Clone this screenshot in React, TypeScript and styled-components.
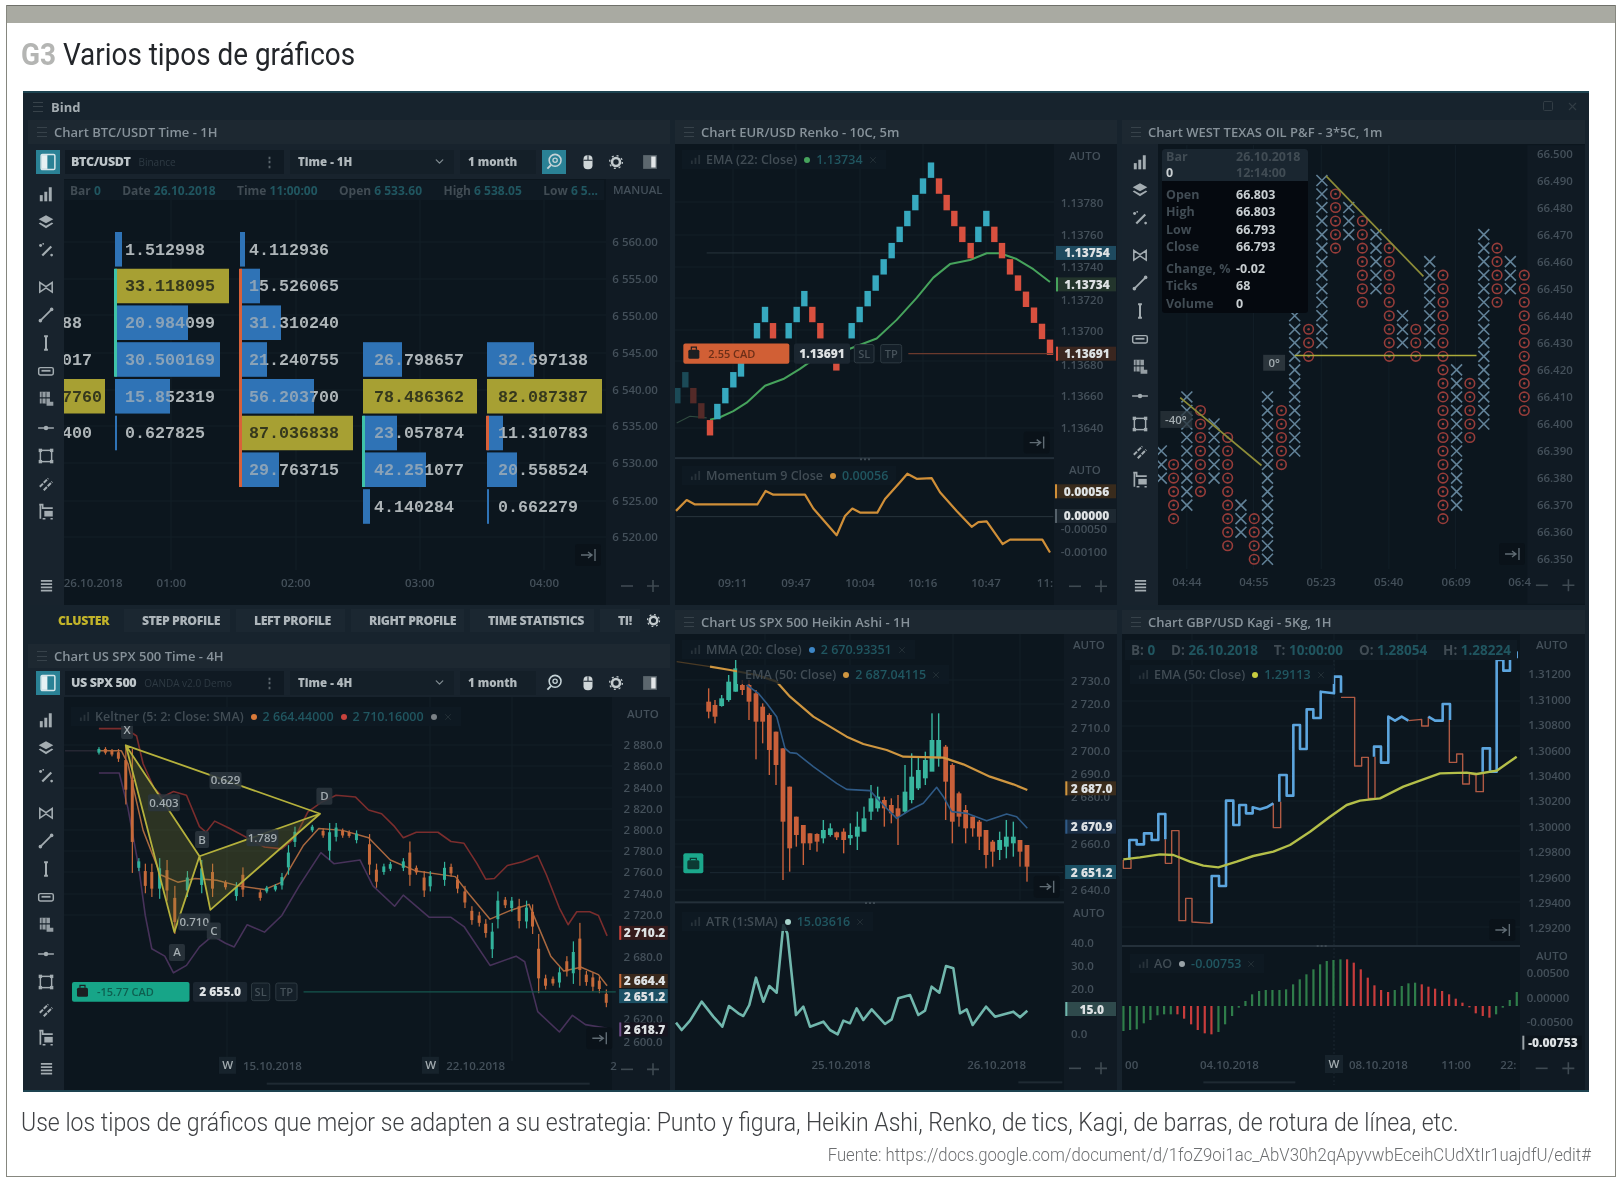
import React from 'react';
import styled, { createGlobalStyle } from 'styled-components';
import { ChevronDown, Square, X } from 'lucide-react';

const GlobalStyle = createGlobalStyle`
  body {
    margin: 0;
    background: #fff;
    font-family: 'Open Sans', 'Liberation Sans', sans-serif;
  }
`;

const UI_FONT = `'Open Sans', 'Liberation Sans', sans-serif`;

// --- page frame

const Sheet = styled.div`
  box-sizing: border-box;
  width: 1610px;
  height: 1172px;
  margin: 5px 0 0 6px;
  border: 1px solid #86877f;
  border-top: none;
  overflow: hidden;
`;
const TopBand = styled.div`
  height: 17px;
  background: #a9aaa2;
  border-top: 1px solid #6f706a;
`;
const Heading = styled.h1`
  display: flex;
  align-items: center;
  box-sizing: border-box;
  height: 68px;
  margin: 0;
  padding: 0 0 6px 15.5px;
  font-family: Roboto, 'Liberation Sans', sans-serif;
  font-size: 31px;
  font-weight: 400;
  color: #23262a;
  white-space: pre;
  transform: scaleX(0.9);
  transform-origin: left;
`;
const HeadingCode = styled.span`
  font-weight: 700;
  color: #b4b5b3;
`;
const Caption = styled.p`
  margin: 15px 0 0 14px;
  font-family: Roboto, 'Liberation Sans', sans-serif;
  font-size: 25.5px;
  font-weight: 300;
  color: #3f4144;
  white-space: nowrap;
  transform: scaleX(0.904);
  transform-origin: left;
`;
const Source = styled.p`
  margin: 8px 24px 0 0;
  text-align: right;
  font-family: Roboto, 'Liberation Sans', sans-serif;
  font-size: 17.5px;
  font-weight: 300;
  color: #6d6f71;
  white-space: nowrap;
  transform: scaleX(0.957);
  transform-origin: right;
`;

// --- trading app window

const AppWindow = styled.div`
  box-sizing: border-box;
  width: 1566px;
  height: 1001px;
  margin-left: 16px;
  background: #17232d;
  border-top: 2px solid #1d4350;
  border-bottom: 2px solid #1d4350;
  filter: blur(0.75px);
  overflow: hidden;
`;
const WindowBar = styled.div`
  display: flex;
  align-items: center;
  height: 27px;
  padding: 0 10px;
  gap: 8px;
  color: #a3acb1;
  font-size: 13px;
  font-weight: 700;
`;
const WindowActions = styled.div`
  display: flex;
  gap: 12px;
  margin-left: auto;
  color: #323d45;
`;
const Columns = styled.div`
  display: grid;
  grid-template-columns: 642px 442px 463px;
  gap: 5px;
  padding: 0 4px 0 5px;
`;
const Column = styled.div<{ $gap?: number }>`
  display: flex;
  flex-direction: column;
  gap: ${(p) => p.$gap ?? 5}px;
`;
const Panel = styled.section<{ $h: number }>`
  display: flex;
  flex-direction: column;
  height: ${(p) => p.$h}px;
  background: #141f28;
`;
const TitleBar = styled.div`
  display: flex;
  flex: none;
  align-items: center;
  gap: 7px;
  height: 24px;
  padding: 0 9px;
  background: #1d2831;
  color: #87929a;
  font-size: 13px;
  font-weight: 600;
  white-space: nowrap;
`;
const Grip = styled.span`
  flex: none;
  width: 10px;
  height: 8px;
  border-top: 1px solid #37424a;
  border-bottom: 1px solid #37424a;
  background: linear-gradient(#37424a, #37424a) center / 100% 1px no-repeat;
`;
const Toolbar = styled.div<{ $h: number }>`
  display: flex;
  flex: none;
  align-items: center;
  gap: 6px;
  height: ${(p) => p.$h}px;
  padding: 0 8px;
  background: #18232d;
`;
const ToolButton = styled.span<{ $on?: boolean; $ml?: number }>`
  display: flex;
  align-items: center;
  justify-content: center;
  flex: none;
  width: 24px;
  height: 24px;
  margin-left: ${(p) => p.$ml ?? 0}px;
  background: ${(p) => (p.$on ? '#2a8195' : 'transparent')};
`;
const SymbolBox = styled.div`
  display: flex;
  flex: none;
  align-items: center;
  gap: 8px;
  box-sizing: border-box;
  width: 219px;
  height: 24px;
  margin-left: -1px;
  padding: 0 8px 0 6px;
  background: #101a23;
  color: #bcc4c8;
  font-size: 12.5px;
  font-weight: 800;
  letter-spacing: -0.4px;
`;
const SymbolHint = styled.span`
  flex: 1;
  color: #2e3a43;
  font-size: 10px;
  font-weight: 400;
  letter-spacing: 0;
`;
const Dots = styled.span`
  color: #5a656c;
`;
const SelectBox = styled.div<{ $w: number }>`
  display: flex;
  flex: none;
  align-items: center;
  justify-content: space-between;
  box-sizing: border-box;
  width: ${(p) => p.$w}px;
  height: 24px;
  padding: 0 8px;
  background: #141f28;
  color: #b0b8bc;
  font-size: 11.5px;
  font-weight: 800;
`;
const Body = styled.div`
  display: flex;
  flex: 1;
  min-height: 0;
`;
const Rail = styled.div<{ $top: number; $foot: number }>`
  display: flex;
  flex: none;
  flex-direction: column;
  align-items: center;
  width: 36px;
  padding: ${(p) => p.$top}px 0 ${(p) => p.$foot}px;
  box-sizing: border-box;
  background: #18232d;
`;
const RailIcon = styled.span<{ $gap?: boolean }>`
  display: flex;
  align-items: center;
  justify-content: center;
  flex: none;
  height: 28.2px;
  margin-bottom: ${(p) => (p.$gap ? 8 : 0)}px;
  color: #a3acb1;
`;
const RailFoot = styled(RailIcon)`
  margin-top: auto;
`;
const ChartArea = styled.div`
  position: relative;
  flex: 1;
  min-width: 0;
  background: #0c161e;
`;
const Plot = styled.svg`
  display: block;
  width: 100%;
  height: 100%;
`;
const Legend = styled.div<{ $left: number; $top: number }>`
  position: absolute;
  left: ${(p) => p.$left}px;
  top: ${(p) => p.$top}px;
  display: flex;
  align-items: center;
  gap: 5px;
  height: 19px;
  padding: 0 8px;
  background: #0f1a23d0;
  color: #414c54;
  font-size: 12.5px;
  font-weight: 600;
  white-space: nowrap;
`;
const LegendDot = styled.i<{ $c: string }>`
  width: 6px;
  height: 6px;
  margin: 0 1px 0 2px;
  border-radius: 50%;
  background: ${(p) => p.$c};
`;
const LegendValue = styled.span`
  color: #205660;
`;
const InfoStrip = styled.div<{ $left: number; $top: number; $w: number; $fs: number }>`
  position: absolute;
  left: ${(p) => p.$left}px;
  top: ${(p) => p.$top}px;
  box-sizing: border-box;
  display: flex;
  align-items: center;
  justify-content: space-between;
  width: ${(p) => p.$w}px;
  height: 20px;
  padding: 0 6px;
  background: #0f1a23;
  color: #414c54;
  font-size: ${(p) => p.$fs}px;
  font-weight: 700;
  white-space: nowrap;
`;
const Tabs = styled.div`
  display: flex;
  flex: none;
  align-items: center;
  gap: 6px;
  box-sizing: border-box;
  height: 34px;
  padding: 0 8px 3px 14px;
  background: #17232d;
`;
const Tab = styled.span<{ $w: number; $on?: boolean }>`
  display: flex;
  flex: none;
  align-items: center;
  box-sizing: border-box;
  width: ${(p) => p.$w}px;
  height: 23px;
  padding-left: ${(p) => (p.$on ? 16 : 18)}px;
  background: ${(p) => (p.$on ? 'transparent' : '#1b2731')};
  color: ${(p) => (p.$on ? '#c2b42a' : '#adb5ba')};
  font-size: 12.3px;
  font-weight: 800;
  letter-spacing: -0.4px;
  white-space: nowrap;
`;
const PanelGap = styled.div`
  flex: none;
  height: 5px;
`;
const PfCard = styled.div`
  position: absolute;
  left: 4px;
  top: 5px;
  width: 146px;
  height: 164px;
  background: #05090f;
  border-radius: 3px;
  font-size: 12.5px;
  font-weight: 700;
  overflow: hidden;
`;
const PfHead = styled.div`
  display: grid;
  grid-template-columns: 70px 1fr;
  align-items: center;
  height: 32px;
  padding: 0 4px;
  background: #1a2630;
  color: #414c54;
  line-height: 16px;
`;
const PfRows = styled.dl`
  display: grid;
  grid-template-columns: 70px 1fr;
  margin: 5px 0 0;
  padding: 0 4px;
  line-height: 17.3px;
`;
const PfName = styled.dt<{ $sep?: boolean }>`
  margin-top: ${(p) => (p.$sep ? 5 : 0)}px;
  color: #414c54;
`;
const PfValue = styled.dd<{ $sep?: boolean }>`
  margin: ${(p) => (p.$sep ? 5 : 0)}px 0 0;
  color: #c8ced1;
`;
const PfBright = styled.span`
  color: #c8ced1;
`;

// --- svg parts of the charts

const AxisText = styled.text`
  fill: #44505a;
  font-family: ${UI_FONT};
  font-size: 11.5px;
  font-weight: 600;
`;
const TagText = styled.text`
  fill: #dde1e3;
  font-family: ${UI_FONT};
  font-size: 12px;
  font-weight: 800;
`;
const ClusterText = styled.text<{ $dark?: boolean }>`
  fill: ${(p) => (p.$dark ? '#35381d' : '#aeb5b8')};
  font-family: 'Liberation Mono', monospace;
  font-size: 16.7px;
  font-weight: 700;
`;
const SmallLabel = styled.text`
  fill: #a3acb0;
  font-family: ${UI_FONT};
  font-size: 11.5px;
  font-weight: 600;
  text-anchor: middle;
`;
const OrderText = styled.text<{ $c: string }>`
  fill: ${(p) => p.$c};
  font-family: ${UI_FONT};
  font-size: 11px;
  font-weight: 600;
`;

type Z = { ox: number; oy: number; sx: number; sy: number };
type Pt = [number, number];

// crops the coordinates were read from
const Z1: Z = { ox: 0, oy: 0, sx: 2.306, sy: 2.529 };
const Z2: Z = { ox: 670, oy: 90, sx: 3, sy: 2.958 };
const Z3: Z = { ox: 1120, oy: 90, sx: 3, sy: 2.958 };
const Z4: Z = { ox: 0, oy: 600, sx: 2.306, sy: 2.703 };
const Z5: Z = { ox: 670, oy: 600, sx: 3, sy: 3 };
const Z6: Z = { ox: 1120, oy: 600, sx: 3, sy: 3 };

const px = (z: Z, x: number) => z.ox + x / z.sx;
const py = (z: Z, y: number) => z.oy + y / z.sy;
const line = (z: Z, pts: Pt[]) => pts.map(([x, y]) => `${px(z, x)},${py(z, y)}`).join(' ');

const Poly = ({ z, pts, c, w = 1.5 }: { z: Z; pts: Pt[]; c: string; w?: number }) => (
  <polyline points={line(z, pts)} fill="none" stroke={c} strokeWidth={w} strokeLinejoin="round" />
);

const Tag = ({ z, x0, x1, y, text, bg, stripe }: { z: Z; x0: number; x1: number; y: number; text: string; bg: string; stripe: string }) => (
  <g>
    <rect x={px(z, x0)} y={py(z, y) - 7} width={px(z, x1) - px(z, x0)} height={14} fill={bg} />
    <rect x={px(z, x0)} y={py(z, y) - 7} width={2} height={14} fill={stripe} />
    <TagText x={(px(z, x0) + px(z, x1)) / 2 + 1} y={py(z, y) + 4.5} textAnchor="middle">{text}</TagText>
  </g>
);

const Axis = ({ z, x, ticks }: { z: Z; x: number; ticks: [string, number][] }) => (
  <>
    {ticks.map(([t, y]) => (
      <AxisText key={t + y} x={px(z, x)} y={py(z, y) + 4}>{t}</AxisText>
    ))}
  </>
);

const TimeAxis = ({ z, y, ticks }: { z: Z; y: number; ticks: [string, number][] }) => (
  <>
    {ticks.map(([t, x]) => (
      <AxisText key={t + x} x={px(z, x)} y={py(z, y) + 4} textAnchor="middle">{t}</AxisText>
    ))}
  </>
);

const Zoomers = ({ x1, x2, y }: { x1: number; x2: number; y: number }) => (
  <g stroke="#3f4a52" strokeWidth={1.6}>
    <path d={`M${x1 - 6} ${y}h12`} />
    <path d={`M${x2 - 6} ${y}h12M${x2} ${y - 6}v12`} />
  </g>
);

const JumpButton = ({ x, y }: { x: number; y: number }) => (
  <g>
    <rect x={x - 13} y={y - 11} width={26} height={22} rx={3} fill="#0a1219" />
    <path d={`M${x - 7} ${y}h11M${x} ${y - 3}l4 3l-4 3M${x + 7} ${y - 6}v12`} fill="none" stroke="#606c74" strokeWidth={1.4} />
  </g>
);

const GridLines = ({ xs, ys, x0, x1, y0, y1 }: { xs: number[]; ys: number[]; x0: number; x1: number; y0: number; y1: number }) => (
  <g stroke="#121e27" strokeWidth={1}>
    {xs.map((x) => <path key={'v' + x} d={`M${x} ${y0}V${y1}`} />)}
    {ys.map((y) => <path key={'h' + y} d={`M${x0} ${y}H${x1}`} />)}
  </g>
);

const OrderBar = ({ z, box, yTop, yBot, bg, ink, label, price, priceBox, sl, tp, lineFrom, lineTo, lineColor }: {
  z: Z; box: [number, number]; yTop: number; yBot: number; bg: string; ink: string; label: string; price: string;
  priceBox: [number, number]; sl: [number, number]; tp: [number, number]; lineFrom: number; lineTo: number; lineColor: string;
}) => {
  const y = py(z, yTop);
  const h = py(z, yBot) - y;
  const mid = y + h / 2;
  return (
    <g>
      <path d={`M${px(z, lineFrom)} ${mid}H${px(z, lineTo)}`} stroke={lineColor} strokeWidth={1.2} />
      <rect x={px(z, box[0])} y={y} width={px(z, box[1]) - px(z, box[0])} height={h} rx={2} fill={bg} />
      <rect x={px(z, box[0]) + 5} y={mid - 4} width={11} height={9} rx={1.5} fill="#1c1f22" />
      <path d={`M${px(z, box[0]) + 8} ${mid - 4}v-2.5h5v2.5`} fill="none" stroke="#1c1f22" strokeWidth={1.2} />
      <OrderText $c={ink} x={px(z, box[0]) + 25} y={mid + 4}>{label}</OrderText>
      <rect x={px(z, priceBox[0])} y={y} width={px(z, priceBox[1]) - px(z, priceBox[0])} height={h} rx={2} fill="#1b2630" />
      <TagText x={(px(z, priceBox[0]) + px(z, priceBox[1])) / 2} y={mid + 4.5} textAnchor="middle">{price}</TagText>
      {[['SL', sl], ['TP', tp]].map(([t, b]) => {
        const bb = b as [number, number];
        return (
          <g key={t as string}>
            <rect x={px(z, bb[0])} y={y + 1} width={px(z, bb[1]) - px(z, bb[0])} height={h - 2} rx={2} fill="#141f28" stroke="#2e3a42" />
            <OrderText $c="#46525a" x={(px(z, bb[0]) + px(z, bb[1])) / 2} y={mid + 4} textAnchor="middle">{t as string}</OrderText>
          </g>
        );
      })}
    </g>
  );
};

// --- small icons

const Ico = ({ children, w = 18 }: { children: React.ReactNode; w?: number }) => (
  <svg width={w} height={w} viewBox="0 0 16 16" fill="currentColor" stroke="none">{children}</svg>
);

const railIcons: React.ReactNode[] = [
  <><rect x="2.5" y="9" width="2.6" height="5.5" /><rect x="6.5" y="6" width="2.6" height="8.5" /><rect x="10.5" y="2" width="2.6" height="12.5" /></>,
  <><path d="M8 2l6.5 3.5L8 9 1.5 5.5z" /><path d="M2.8 8.5L8 11.3l5.2-2.8 1.3.8L8 13.5 1.5 9.3z" /></>,
  <><path d="M4 12.2l8-8 1.4 1.4-8 8z" /><circle cx="3.2" cy="4" r="1.3" /><circle cx="5.5" cy="2.5" r=".8" /><circle cx="13" cy="12.5" r="1.2" /></>,
  <path d="M2.5 4v8.5L8 8.8l5.5 3.7V4L8 7.7zM8 8.2" fill="none" stroke="currentColor" strokeWidth="1.4" />,
  <><path d="M3 13L13 3" stroke="currentColor" strokeWidth="1.5" /><circle cx="3" cy="13" r="1.6" /><circle cx="13" cy="3" r="1.6" /></>,
  <><path d="M8 2v12" stroke="currentColor" strokeWidth="1.8" /><path d="M6.3 2h3.4M6.3 14h3.4" stroke="currentColor" strokeWidth="1.6" /></>,
  <><rect x="1.5" y="5" width="13" height="6.5" rx="1.5" fill="none" stroke="currentColor" strokeWidth="1.3" /><rect x="4" y="7" width="8" height="1.6" /></>,
  <><path d="M2.5 1.5h9v5h-9zM2.5 7.5h9v3h3v3.5h-6v-2h-6z" opacity=".9" /><path d="M4.5 2v11M8 2v10" stroke="#18232d" strokeWidth=".7" /></>,
  <><path d="M1 8h14" stroke="currentColor" strokeWidth="1.3" /><circle cx="8" cy="8" r="2" /></>,
  <><rect x="3" y="3" width="10" height="10" fill="none" stroke="currentColor" strokeWidth="1.3" /><rect x="1.5" y="1.5" width="3" height="3" /><rect x="11.5" y="1.5" width="3" height="3" /><rect x="1.5" y="11.5" width="3" height="3" /><rect x="11.5" y="11.5" width="3" height="3" /></>,
  <path d="M2.5 10.5L10 3M6 13.5L13.5 6" fill="none" stroke="currentColor" strokeWidth="1.8" strokeDasharray="4 1" />,
  <><path d="M2 1.5h3v3h9M3 2v12" fill="none" stroke="currentColor" strokeWidth="1.5" /><rect x="6.5" y="7" width="7.5" height="5" /><path d="M5 14h2.5M12 14h2" stroke="currentColor" strokeWidth="1.2" /></>,
];

const ListIcon = () => (
  <Ico w={15}><path d="M2 3h12M2 6.5h12M2 10h12M2 13.5h12" stroke="currentColor" strokeWidth="2" /></Ico>
);

const SideRail = ({ top, foot }: { top: number; foot: number }) => (
  <Rail $top={top} $foot={foot}>
    {railIcons.map((ic, i) => (
      <RailIcon key={i} $gap={i === 2}><Ico>{ic}</Ico></RailIcon>
    ))}
    <RailFoot><ListIcon /></RailFoot>
  </Rail>
);

const GearIcon = ({ w }: { w: number }) => (
  <Ico w={w}>
    <circle cx="8" cy="8" r="4" fill="none" stroke="#c2cacd" strokeWidth="2.6" />
    <circle cx="8" cy="8" r="6.4" fill="none" stroke="#c2cacd" strokeWidth="1.3" strokeDasharray="2 3" />
  </Ico>
);

const ChartToolbar = ({ h, symbol, hint, time, active }: { h: number; symbol: string; hint: string; time: string; active?: boolean }) => (
  <Toolbar $h={h}>
    <ToolButton $on>
      <Ico w={20}><rect x="2.5" y="2" width="11" height="12" rx="1" fill="none" stroke="#d6e6ea" strokeWidth="1.2" /><rect x="3" y="2.5" width="4.5" height="11" fill="#e6f1f3" /></Ico>
    </ToolButton>
    <SymbolBox>
      {symbol}
      <SymbolHint>{hint}</SymbolHint>
      <Dots>⋮</Dots>
    </SymbolBox>
    <SelectBox $w={164}>
      {time}
      <ChevronDown size={13} color="#7f8a90" strokeWidth={2.4} />
    </SelectBox>
    <SelectBox $w={76}>1 month</SelectBox>
    <ToolButton $on={active}>
      <Ico w={19}>
        <circle cx="8.5" cy="7" r="5" fill="none" stroke="#c5d3d7" strokeWidth="1.3" />
        <circle cx="8.5" cy="7" r="1.8" fill="none" stroke="#c5d3d7" strokeWidth="1.1" />
        <path d="M5 11l-3 3" stroke="#c5d3d7" strokeWidth="1.6" />
      </Ico>
    </ToolButton>
    <ToolButton $ml={4}>
      <Ico w={18}><rect x="4" y="2" width="8" height="12.5" rx="3.6" fill="#cfd6d8" /><path d="M8 2v4M4 6.5h8" stroke="#18232d" strokeWidth=".9" /></Ico>
    </ToolButton>
    <ToolButton $ml={-2}>
      <GearIcon w={16} />
    </ToolButton>
    <ToolButton $ml={4}>
      <Ico w={20}><rect x="2.5" y="2.5" width="11" height="11" fill="#5c676e" /><rect x="9" y="3.6" width="3.5" height="8.8" fill="#e2e6e8" /></Ico>
    </ToolButton>
  </Toolbar>
);

// --- BTC cluster chart

type Cell = { row: number; text: string; to: number; kind: 'blue' | 'yellow' };
const clusterCols: { x: number; tx: number; stripe?: [number, number, string]; cells: Cell[] }[] = [
  {
    x: 64, tx: 62,
    cells: [
      { row: 2, text: '88', to: 64, kind: 'blue' },
      { row: 3, text: '017', to: 64, kind: 'blue' },
      { row: 4, text: '7760', to: 105, kind: 'yellow' },
      { row: 5, text: '400', to: 64, kind: 'blue' },
    ],
  },
  {
    x: 115, tx: 125, stripe: [1, 3, '#3fc3a8'],
    cells: [
      { row: 0, text: '1.512998', to: 122, kind: 'blue' },
      { row: 1, text: '33.118095', to: 229, kind: 'yellow' },
      { row: 2, text: '20.984099', to: 188, kind: 'blue' },
      { row: 3, text: '30.500169', to: 220, kind: 'blue' },
      { row: 4, text: '15.852319', to: 170, kind: 'blue' },
      { row: 5, text: '0.627825', to: 117, kind: 'blue' },
    ],
  },
  {
    x: 240, tx: 249, stripe: [1, 6, '#d8613a'],
    cells: [
      { row: 0, text: '4.112936', to: 245, kind: 'blue' },
      { row: 1, text: '15.526065', to: 260, kind: 'blue' },
      { row: 2, text: '31.310240', to: 281, kind: 'blue' },
      { row: 3, text: '21.240755', to: 267, kind: 'blue' },
      { row: 4, text: '56.203700', to: 314, kind: 'blue' },
      { row: 5, text: '87.036838', to: 353, kind: 'yellow' },
      { row: 6, text: '29.763715', to: 279, kind: 'blue' },
    ],
  },
  {
    x: 363, tx: 374, stripe: [5, 6, '#3fc3a8'],
    cells: [
      { row: 3, text: '26.798657', to: 402, kind: 'blue' },
      { row: 4, text: '78.486362', to: 477, kind: 'yellow' },
      { row: 5, text: '23.057874', to: 397, kind: 'blue' },
      { row: 6, text: '42.251077', to: 426, kind: 'blue' },
      { row: 7, text: '4.140284', to: 370, kind: 'blue' },
    ],
  },
  {
    x: 487, tx: 498, stripe: [5, 5, '#d8613a'],
    cells: [
      { row: 3, text: '32.697138', to: 534, kind: 'blue' },
      { row: 4, text: '82.087387', to: 602, kind: 'yellow' },
      { row: 5, text: '11.310783', to: 503, kind: 'blue' },
      { row: 6, text: '20.558524', to: 517, kind: 'blue' },
      { row: 7, text: '0.662279', to: 489, kind: 'blue' },
    ],
  },
];
const rowY = (r: number) => 249 + r * 36.75;

const ClusterChart = () => (
  <Plot viewBox="64 179 606 426">
    <rect x={606} y={179} width={64} height={426} fill="#101a23" />
    <GridLines xs={[171, 296, 420, 544]} ys={[242, 279, 315, 353, 390, 426, 463, 501, 537]} x0={64} x1={606} y0={200} y1={570} />
    {clusterCols.map((col) => (
      <g key={col.x}>
        {col.cells.map((c) => (
          <rect key={c.row} x={col.x} y={rowY(c.row) - 17} width={c.to - col.x} height={34.5} fill={c.kind === 'yellow' ? '#a7a033' : '#3074b6'} />
        ))}
        {col.cells.map((c) => (
          <ClusterText key={c.row} $dark={c.kind === 'yellow'} x={col.tx} y={rowY(c.row) + 5.5}>{c.text}</ClusterText>
        ))}
        {/* the numbers sit under the volume bar, so they go pale blue inside it */}
        {col.cells.filter((c) => c.kind === 'blue').map((c) => (
          <rect key={c.row} x={col.x} y={rowY(c.row) - 17} width={c.to - col.x} height={34.5} fill="#3074b6" opacity={0.28} />
        ))}
        {col.stripe && (
          <rect x={col.x - 1} y={rowY(col.stripe[0]) - 17} width={3} height={rowY(col.stripe[1]) - rowY(col.stripe[0]) + 34.5} fill={col.stripe[2]} />
        )}
      </g>
    ))}
    <AxisText x={613} y={194}>MANUAL</AxisText>
    <Axis z={Z1} x={1412} ticks={[['6 560.00', 612], ['6 555.00', 706], ['6 550.00', 798], ['6 545.00', 892], ['6 540.00', 986], ['6 535.00', 1078], ['6 530.00', 1172], ['6 525.00', 1266], ['6 520.00', 1358]]} />
    <TimeAxis z={Z1} y={1474} ticks={[['26.10.2018', 215], ['01:00', 395], ['02:00', 682], ['03:00', 968], ['04:00', 1255]]} />
    <JumpButton x={588} y={555} />
    <Zoomers x1={627} x2={653} y={586} />
  </Plot>
);

// --- EUR/USD renko chart

type Brick = [number, number, number];
const bricks: Brick[] = [
  [22, 905, 2], [46, 858, 2], [70, 905, 3], [94, 950, 3], [120, 1000, 0],
  [142, 952, 1], [166, 905, 1], [190, 858, 1], [213, 826, 1], [261, 713, 1], [285, 665, 1], [309, 713, 0],
  [356, 713, 1], [380, 665, 1], [403, 618, 1], [427, 665, 0], [451, 713, 0], [499, 808, 0],
  [545, 713, 1], [569, 665, 1], [593, 618, 1], [617, 572, 1], [641, 524, 1], [665, 476, 1], [689, 428, 1],
  [712, 381, 1], [736, 334, 1], [759, 285, 1], [783, 238, 1], [807, 285, 0], [830, 334, 0], [853, 381, 0],
  [877, 428, 0], [902, 476, 0], [925, 428, 1], [949, 381, 1], [973, 428, 0], [996, 476, 0], [1020, 524, 0],
  [1044, 572, 0], [1068, 620, 0], [1092, 667, 0], [1116, 715, 0], [1140, 762, 0],
];
const brickFill = ['#d8503f', '#37a9bf', '#1b4a57', '#532a28'];

const RenkoChart = () => (
  <Plot viewBox="675 144 442 461">
    <rect x={1054} y={144} width={63} height={461} fill="#101a23" />
    <GridLines xs={[733, 796, 860, 923, 986]} ys={[202, 235, 267, 298, 330, 361, 396, 428]} x0={675} x1={1054} y0={144} y1={458} />
    <path d={`M${px(Z2, 110)} ${py(Z2, 482)}H${px(Z2, 1150)}`} stroke="#28353d" />
    <Poly z={Z2} c="#2f4a3f" w={1.2} pts={[[20, 985], [60, 965], [110, 970]]} />
    <Poly z={Z2} c="#46a35c" w={2} pts={[[120, 975], [150, 968], [190, 950], [230, 925], [285, 875], [340, 855], [390, 825], [440, 790], [500, 780], [620, 735], [680, 680], [740, 615], [790, 555], [840, 515], [900, 503], [950, 483], [990, 483], [1040, 500], [1090, 530], [1140, 568]]} />
    {bricks.map(([x, y, k]) => (
      <rect key={x} x={px(Z2, x) - 3.2} y={py(Z2, y) - 8} width={6.4} height={15.4} fill={brickFill[k]} />
    ))}
    <OrderBar z={Z2} box={[40, 358]} yTop={750} yBot={810} bg="#d15f35" ink="#6d2f18" label="2.55 CAD" price="1.13691" priceBox={[372, 540]} sl={[553, 612]} tp={[632, 695]} lineFrom={715} lineTo={1150} lineColor="#6b3a2d" />
    <AxisText x={1069} y={160}>AUTO</AxisText>
    <Axis z={Z2} x={1172} ticks={[['1.13780', 333], ['1.13760', 430], ['1.13740', 523], ['1.13720', 620], ['1.13700', 713], ['1.13680', 812], ['1.13660', 905], ['1.13640', 1000]]} />
    <Tag z={Z2} x0={1158} x1={1338} y={482} text="1.13754" bg="#1e4a5f" stripe="#1e4a5f" />
    <Tag z={Z2} x0={1158} x1={1338} y={575} text="1.13734" bg="#23352c" stripe="#46a35c" />
    <Tag z={Z2} x0={1158} x1={1338} y={780} text="1.13691" bg="#3a261f" stripe="#d8503f" />
    <rect x={675} y={py(Z2, 1086)} width={379} height={2} fill="#24303a" />
    <path d={`M${px(Z2, 570)} ${py(Z2, 1092)}h12`} stroke="#3c4851" strokeWidth={2} strokeDasharray="2 2" />
    <path d={`M${px(Z2, 20)} ${py(Z2, 1262)}H${px(Z2, 1150)}`} stroke="#28353d" />
    <Poly z={Z2} c="#d08f38" w={2.2} pts={[[18, 1245], [50, 1213], [75, 1226], [262, 1226], [287, 1186], [310, 1197], [405, 1197], [430, 1238], [500, 1317], [525, 1260], [547, 1238], [570, 1250], [622, 1250], [645, 1210], [690, 1160], [712, 1135], [740, 1150], [785, 1148], [810, 1190], [860, 1245], [905, 1292], [925, 1278], [950, 1276], [998, 1343], [1020, 1330], [1117, 1330], [1140, 1368]]} />
    <JumpButton x={px(Z2, 1100)} y={py(Z2, 1043)} />
    <AxisText x={1069} y={474}>AUTO</AxisText>
    <Axis z={Z2} x={1172} ticks={[['-0.00050', 1300], ['-0.00100', 1368]]} />
    <Tag z={Z2} x0={1155} x1={1338} y={1187} text="0.00056" bg="#392b1c" stripe="#d08f38" />
    <Tag z={Z2} x0={1155} x1={1338} y={1260} text="0.00000" bg="#1d2831" stripe="#55616a" />
    <TimeAxis z={Z2} y={1458} ticks={[['09:11', 188], ['09:47', 378], ['10:04', 570], ['10:16', 758], ['10:47', 948], ['11:', 1125]]} />
    <Zoomers x1={px(Z2, 1215)} x2={px(Z2, 1293)} y={py(Z2, 1468)} />
  </Plot>
);

// --- point and figure chart

const pfCols: [number, number, number][] = [
  [118, 20, 22], [155, 21, 25], [195, 16, 24], [236, 17, 23], [277, 18, 22], [318, 19, 27], [358, 24, 26],
  [398, 25, 28], [438, 16, 28], [480, 17, 21], [520, 10, 20], [562, 11, 13], [602, 0, 12], [643, 1, 5],
  [683, 2, 4], [724, 3, 9], [765, 4, 8], [805, 5, 13], [845, 10, 12], [885, 11, 13], [927, 6, 12], [967, 7, 25],
  [1008, 14, 24], [1048, 15, 19], [1090, 4, 18], [1130, 5, 9], [1170, 6, 8], [1212, 7, 17],
];
const pfY = (n: number) => py(Z3, 265 + n * 40.2);

const PfMark = ({ x, y, cross }: { x: number; y: number; cross: boolean }) =>
  cross ? (
    <path d={`M${x - 5.5} ${y - 5.5}l11 11M${x + 5.5} ${y - 5.5}l-11 11`} stroke="#628298" strokeWidth={1.6} />
  ) : (
    <g>
      <circle cx={x} cy={y} r={4.8} fill="none" stroke="#983d3a" strokeWidth={1.6} />
      <circle cx={x} cy={y} r={1.3} fill="#983d3a" />
    </g>
  );

const PfChart = () => (
  <Plot viewBox="1156 144 429 461">
    <rect x={1527} y={144} width={58} height={461} fill="#101a23" />
    <GridLines xs={[1185, 1252, 1320, 1388, 1455]} ys={[]} x0={1156} x1={1527} y0={144} y1={570} />
    {pfCols.map(([x, a, b], i) =>
      Array.from({ length: b - a + 1 }, (_, k) => (
        <PfMark key={k} x={px(Z3, x)} y={pfY(a + k)} cross={i % 2 === 0} />
      )),
    )}
    <g stroke="#8c8c38" strokeWidth={1.7}>
      <path d={`M${px(Z3, 615)} ${py(Z3, 252)}L${px(Z3, 908)} ${py(Z3, 550)}`} />
      <path d={`M${px(Z3, 175)} ${py(Z3, 910)}L${px(Z3, 420)} ${py(Z3, 1112)}`} />
      <path d={`M${px(Z3, 520)} ${py(Z3, 785)}H${px(Z3, 1068)}`} stroke="#abab3a" />
    </g>
    <rect x={px(Z3, 425)} y={py(Z3, 783)} width={22} height={16} fill="#2b353c" />
    <SmallLabel x={px(Z3, 458)} y={py(Z3, 783) + 12}>0°</SmallLabel>
    <rect x={px(Z3, 115)} y={py(Z3, 950)} width={32} height={17} fill="#2b353cc0" />
    <SmallLabel x={px(Z3, 162)} y={py(Z3, 950) + 13}>-40°</SmallLabel>
    <Axis z={Z3} x={1250} ticks={Array.from({ length: 16 }, (_, i) => [(66.5 - i * 0.01).toFixed(3), 186 + i * 80.2] as [string, number])} />
    <TimeAxis z={Z3} y={1458} ticks={[['04:44', 195], ['04:55', 397], ['05:23', 600], ['05:40', 803], ['06:09', 1007], ['06:4', 1198]]} />
    <JumpButton x={px(Z3, 1175)} y={py(Z3, 1375)} />
    <Zoomers x1={px(Z3, 1265)} x2={px(Z3, 1345)} y={py(Z3, 1468)} />
  </Plot>
);

// --- US SPX 4H with harmonic pattern

const spxBars: [number, number, number, number][] = [
  [228, 395, 415, 1], [243, 395, 415, 0], [258, 400, 420, 0], [273, 400, 435, 0], [290, 390, 550, 0], [305, 400, 735, 0],
  [320, 695, 730, 1], [335, 710, 790, 0], [350, 710, 800, 0], [368, 695, 805, 1], [385, 700, 810, 0], [403, 770, 900, 0],
  [432, 730, 800, 1], [465, 700, 790, 1], [490, 710, 800, 0], [520, 755, 780, 0], [545, 760, 810, 1], [560, 720, 800, 0],
  [600, 780, 810, 0], [615, 770, 790, 1], [635, 765, 785, 1], [650, 735, 780, 1], [665, 660, 740, 1], [680, 610, 665, 1],
  [720, 605, 625, 1], [745, 615, 640, 0], [760, 600, 700, 1], [775, 600, 650, 1], [790, 615, 640, 0], [805, 620, 640, 0],
  [822, 620, 655, 1], [852, 630, 740, 0], [868, 710, 775, 0], [885, 710, 740, 1], [900, 705, 730, 1], [930, 695, 730, 1],
  [945, 650, 770, 0], [960, 715, 740, 0], [978, 730, 800, 0], [992, 730, 785, 1], [1025, 705, 770, 1], [1040, 710, 745, 0],
  [1055, 740, 790, 0], [1072, 770, 830, 0], [1088, 825, 875, 0], [1105, 840, 880, 0], [1120, 860, 910, 0], [1135, 870, 965, 1],
  [1148, 785, 885, 1], [1165, 800, 830, 0], [1180, 800, 840, 1], [1197, 805, 885, 0], [1214, 810, 885, 1], [1228, 820, 900, 0],
  [1242, 900, 1060, 0], [1258, 1010, 1050, 0], [1275, 1015, 1040, 0], [1290, 990, 1045, 1], [1307, 960, 1015, 0],
  [1322, 920, 1035, 1], [1337, 870, 1040, 0], [1352, 1000, 1040, 0], [1367, 1005, 1055, 0], [1382, 1015, 1060, 0], [1398, 1050, 1098, 0],
];

const Pick = ({ z, x, y, t, w = 14 }: { z: Z; x: number; y: number; t: string; w?: number }) => (
  <g>
    <rect x={px(z, x) - w} y={py(z, y) - 8.5} width={w * 2} height={17} rx={2} fill="#2b363de0" />
    <SmallLabel x={px(z, x)} y={py(z, y) + 4}>{t}</SmallLabel>
  </g>
);

const SpxChart = () => (
  <Plot viewBox="64 696 606 395">
    <rect x={612} y={696} width={58} height={395} fill="#101a23" />
    <GridLines xs={[227, 430, 512]} ys={[744, 765, 787, 808, 829, 850, 871, 893, 914]} x0={64} x1={612} y0={696} y1={1060} />
    <Poly z={Z4} c="#34303f" w={1} pts={[[150, 405], [228, 405]]} />
    <Poly z={Z4} c="#7b2d2d" w={1.6} pts={[[228, 345], [290, 345], [315, 365], [330, 440], [355, 505], [375, 530], [400, 515], [430, 525], [460, 610], [475, 625], [495, 595], [530, 615], [570, 640], [610, 665], [650, 670], [680, 640], [710, 570], [740, 545], [775, 525], [820, 530], [850, 565], [880, 575], [910, 610], [930, 640], [960, 625], [1010, 625], [1040, 650], [1070, 655], [1100, 710], [1120, 752], [1140, 750], [1170, 715], [1205, 705], [1240, 688], [1260, 740], [1290, 830], [1310, 875], [1330, 840], [1360, 840], [1380, 850], [1400, 905]]} />
    <Poly z={Z4} c="#47325a" w={1.6} pts={[[228, 465], [275, 465], [295, 560], [320, 720], [335, 850], [350, 940], [380, 960], [400, 1005], [430, 985], [460, 935], [490, 905], [520, 925], [540, 935], [570, 875], [610, 895], [650, 850], [690, 770], [740, 680], [770, 710], [830, 700], [860, 770], [910, 825], [930, 795], [990, 855], [1040, 855], [1070, 880], [1130, 985], [1190, 960], [1210, 975], [1240, 1110], [1290, 1165], [1320, 1120], [1350, 1145], [1400, 1155]]} />
    <Poly z={Z4} c="#a9683f" w={1.5} pts={[[228, 405], [280, 405], [295, 440], [330, 620], [370, 740], [410, 760], [450, 750], [500, 755], [550, 770], [610, 780], [650, 760], [700, 660], [735, 615], [790, 620], [850, 640], [900, 700], [960, 730], [1050, 745], [1080, 790], [1130, 860], [1180, 835], [1220, 820], [1270, 960], [1300, 1000], [1340, 990], [1380, 1010], [1400, 1040]]} />
    {spxBars.map(([x, hi, lo, up]) => {
      const c = up ? '#32b39c' : '#c66a3a';
      const h = py(Z4, lo) - py(Z4, hi);
      return (
        <g key={x}>
          <rect x={px(Z4, x) - 0.5} y={py(Z4, hi)} width={1.2} height={h} fill={c} />
          <rect x={px(Z4, x) - 1.5} y={py(Z4, hi) + h * 0.25} width={3} height={h * 0.5} fill={c} />
        </g>
      );
    })}
    <polygon points={line(Z4, [[290, 390], [402, 895], [460, 690]])} fill="#8b8a3340" stroke="none" />
    <polygon points={line(Z4, [[460, 690], [485, 835], [738, 575]])} fill="#8b8a3340" stroke="none" />
    <Poly z={Z4} c="#b5b13c" w={1.8} pts={[[738, 575], [290, 390], [402, 895], [460, 690], [485, 835], [738, 575], [460, 690], [290, 390]]} />
    <Pick z={Z4} x={378} y={545} t="0.403" w={16} />
    <Pick z={Z4} x={520} y={485} t="0.629" w={16} />
    <Pick z={Z4} x={605} y={640} t="1.789" w={16} />
    <Pick z={Z4} x={448} y={868} t="0.710" w={16} />
    <Pick z={Z4} x={466} y={645} t="B" w={7} />
    <Pick z={Z4} x={493} y={892} t="C" w={7} />
    <Pick z={Z4} x={408} y={950} t="A" w={8} />
    <Pick z={Z4} x={748} y={528} t="D" w={8} />
    <Pick z={Z4} x={293} y={350} t="X" w={6} />
    <OrderBar z={Z4} box={[166, 437]} yTop={1030} yBot={1083} bg="#17a588" ink="#0e5f50" label="-15.77 CAD" price="2 655.0" priceBox={[445, 570]} sl={[580, 622]} tp={[636, 685]} lineFrom={700} lineTo={1420} lineColor="#14564e" />
    <AxisText x={627} y={717}>AUTO</AxisText>
    <Axis z={Z4} x={1438} ticks={[['2 880.0', 390], ['2 860.0', 447], ['2 840.0', 505], ['2 820.0', 563], ['2 800.0', 618], ['2 780.0', 676], ['2 760.0', 733], ['2 740.0', 791], ['2 720.0', 849], ['2 680.0', 963], ['2 620.0', 1130], ['2 600.0', 1191]]} />
    <Tag z={Z4} x0={1428} x1={1540} y={897} text="2 710.2" bg="#351b1c" stripe="#c7433d" />
    <Tag z={Z4} x0={1428} x1={1540} y={1027} text="2 664.4" bg="#3a291c" stripe="#c66a3a" />
    <Tag z={Z4} x0={1428} x1={1540} y={1068} text="2 651.2" bg="#1c5165" stripe="#1c5165" />
    <Tag z={Z4} x0={1428} x1={1540} y={1158} text="2 618.7" bg="#17141f" stripe="#6d4d88" />
    <JumpButton x={px(Z4, 1382)} y={py(Z4, 1182)} />
    <rect x={px(Z4, 505)} y={py(Z4, 1232)} width={17} height={17} fill="#17232c" />
    <rect x={px(Z4, 973)} y={py(Z4, 1232)} width={17} height={17} fill="#17232c" />
    <SmallLabel x={px(Z4, 525)} y={py(Z4, 1255) + 4}>W</SmallLabel>
    <SmallLabel x={px(Z4, 993)} y={py(Z4, 1255) + 4}>W</SmallLabel>
    <TimeAxis z={Z4} y={1257} ticks={[['15.10.2018', 628], ['22.10.2018', 1097], ['2', 1415]]} />
    <rect x={px(Z4, 615)} y={py(Z4, 1302)} width={323} height={2} fill="#1f2a33" />
    <Zoomers x1={627} x2={653} y={py(Z4, 1266)} />
  </Plot>
);

// --- heikin ashi with ATR pane

const haBars: [number, number, number, number, number, number][] = [
  [116, 265, 355, 305, 335, 0], [135, 300, 370, 315, 350, 0], [155, 285, 320, 295, 318, 1], [176, 225, 305, 245, 300, 1],
  [197, 180, 275, 205, 275, 1], [217, 240, 285, 255, 270, 0], [237, 240, 360, 255, 305, 0], [258, 270, 478, 280, 365, 0],
  [278, 310, 430, 320, 365, 0], [298, 340, 525, 345, 450, 0], [318, 395, 555, 395, 495, 0], [339, 445, 840, 445, 665, 0],
  [359, 560, 815, 560, 745, 0], [379, 650, 740, 650, 705, 0], [400, 675, 795, 675, 730, 0], [420, 700, 750, 700, 730, 0],
  [441, 700, 755, 702, 725, 0], [460, 660, 730, 690, 715, 1], [481, 670, 710, 685, 705, 1], [500, 695, 720, 697, 712, 0],
  [521, 685, 760, 695, 720, 0], [541, 670, 735, 705, 715, 1], [562, 635, 750, 680, 710, 1], [582, 620, 695, 655, 695, 1],
  [603, 555, 660, 595, 635, 1], [623, 560, 635, 590, 625, 1], [643, 590, 680, 600, 625, 0], [664, 595, 670, 615, 640, 0],
  [684, 585, 735, 625, 650, 0], [705, 495, 640, 575, 635, 1], [725, 460, 610, 530, 600, 1], [745, 470, 570, 510, 565, 1],
  [766, 455, 555, 480, 535, 1], [786, 340, 510, 420, 515, 1], [806, 340, 500, 420, 475, 1], [827, 435, 660, 440, 545, 0],
  [847, 490, 730, 495, 665, 0], [867, 575, 680, 580, 650, 0], [887, 615, 730, 630, 685, 0], [908, 650, 710, 650, 685, 0],
  [928, 660, 750, 665, 710, 0], [948, 690, 805, 690, 765, 0], [968, 720, 800, 725, 755, 0], [989, 695, 780, 720, 750, 1],
  [1009, 660, 775, 710, 740, 1], [1030, 665, 770, 710, 730, 1], [1050, 720, 800, 720, 755, 0], [1071, 735, 845, 735, 800, 0],
];

const HeikinChart = () => (
  <Plot viewBox="675 634 442 457">
    <rect x={1064} y={634} width={53} height={457} fill="#101a23" />
    <GridLines xs={[765, 850, 953, 1020]} ys={[680, 704, 727, 750, 774, 797, 820, 844, 867, 890]} x0={675} x1={1064} y0={634} y1={900} />
    <path d={`M${px(Z5, 120)} ${py(Z5, 818)}H${px(Z5, 1180)}`} stroke="#1c2933" />
    <Poly z={Z5} c="#4a3a25" w={1.4} pts={[[20, 185], [120, 200]]} />
    {haBars.map(([x, hi, lo, bt, bb, up]) => {
      const c = up ? '#38b59e' : '#c9603a';
      return (
        <g key={x}>
          <rect x={px(Z5, x) - 0.7} y={py(Z5, hi)} width={1.4} height={(lo - hi) / 3} fill={c} />
          <rect x={px(Z5, x) - 2.4} y={py(Z5, bt)} width={4.8} height={(bb - bt) / 3} fill={c} />
        </g>
      );
    })}
    <Poly z={Z5} c="#2f5a86" w={1.6} pts={[[230, 255], [265, 280], [290, 310], [320, 350], [345, 445], [360, 458], [380, 460], [430, 500], [500, 550], [530, 568], [600, 572], [640, 615], [680, 655], [720, 630], [760, 610], [800, 562], [820, 590], [845, 635], [890, 640], [950, 662], [1010, 642], [1040, 650], [1072, 685]]} />
    <Poly z={Z5} c="#cf9640" w={2.2} pts={[[120, 200], [180, 210], [260, 225], [320, 245], [360, 290], [430, 350], [530, 410], [580, 432], [650, 450], [700, 470], [820, 473], [880, 493], [960, 530], [1030, 553], [1072, 570]]} />
    <rect x={px(Z5, 40)} y={py(Z5, 760)} width={20} height={20} rx={2} fill="#1ba88c" />
    <rect x={px(Z5, 40) + 4} y={py(Z5, 760) + 7} width={12} height={9} rx={1.5} fill="#0c3a33" />
    <path d={`M${px(Z5, 40) + 7} ${py(Z5, 760) + 7}v-2h6v2`} fill="none" stroke="#0c3a33" strokeWidth={1.3} />
    <JumpButton x={px(Z5, 1130)} y={py(Z5, 860)} />
    <AxisText x={1073} y={649}>AUTO</AxisText>
    <Axis z={Z5} x={1203} ticks={[['2 730.0', 242], ['2 720.0', 313], ['2 710.0', 383], ['2 700.0', 452], ['2 690.0', 522], ['2 680.0', 592], ['2 660.0', 732], ['2 640.0', 870]]} />
    <Tag z={Z5} x0={1186} x1={1338} y={565} text="2 687.0" bg="#3a2c1c" stripe="#cf9640" />
    <Tag z={Z5} x0={1186} x1={1338} y={680} text="2 670.9" bg="#1a2e45" stripe="#2f5a86" />
    <Tag z={Z5} x0={1186} x1={1338} y={816} text="2 651.2" bg="#1c5165" stripe="#1c5165" />
    <rect x={675} y={py(Z5, 904)} width={389} height={2} fill="#24303a" />
    <path d={`M${px(Z5, 585)} ${py(Z5, 909)}h12`} stroke="#3c4851" strokeWidth={2} strokeDasharray="2 2" />
    <Poly z={Z5} c="#71b7ad" w={2.6} pts={[[18, 1268], [35, 1290], [60, 1262], [95, 1205], [130, 1250], [157, 1280], [177, 1218], [205, 1240], [220, 1248], [238, 1215], [258, 1133], [280, 1205], [298, 1158], [320, 1178], [340, 975], [352, 1000], [378, 1245], [400, 1220], [420, 1280], [460, 1265], [480, 1290], [503, 1303], [520, 1262], [540, 1270], [560, 1225], [580, 1260], [605, 1228], [645, 1272], [665, 1258], [685, 1195], [720, 1185], [745, 1245], [765, 1232], [785, 1160], [808, 1178], [828, 1098], [850, 1105], [870, 1240], [890, 1228], [908, 1275], [948, 1220], [975, 1250], [1030, 1235], [1050, 1252], [1072, 1232]]} />
    <AxisText x={1073} y={917}>AUTO</AxisText>
    <Axis z={Z5} x={1203} ticks={[['40.0', 1030], ['30.0', 1098], ['20.0', 1167], ['0.0', 1303]]} />
    <Tag z={Z5} x0={1186} x1={1338} y={1227} text="15.0" bg="#2f4a4c" stripe="#71b7ad" />
    <TimeAxis z={Z5} y={1395} ticks={[['25.10.2018', 513], ['26.10.2018', 980]]} />
    <rect x={px(Z5, 1045)} y={py(Z5, 1444)} width={44} height={2} fill="#1f2a33" />
    <Zoomers x1={px(Z5, 1215)} x2={px(Z5, 1293)} y={py(Z5, 1405)} />
  </Plot>
);

// --- kagi with AO pane

const kagiUp: Pt[][] = [
  [[28, 780], [28, 720], [50, 720], [50, 733], [72, 733], [72, 700], [95, 700], [95, 720], [115, 720], [115, 642], [136, 642], [136, 718]],
  [[275, 970], [275, 828], [297, 828], [297, 858], [318, 858], [318, 602], [340, 602], [340, 675], [358, 675], [358, 615], [378, 615], [378, 640], [398, 640], [398, 622], [420, 628], [440, 622], [460, 610]],
  [[478, 605], [478, 525], [500, 525], [500, 587], [520, 587], [520, 375], [540, 375], [540, 447], [560, 447], [560, 328], [580, 328], [580, 354], [602, 354], [602, 275], [642, 280], [642, 230], [663, 230], [663, 278]],
  [[762, 470], [762, 440], [783, 440], [783, 488], [805, 488], [805, 350], [825, 362], [845, 350], [865, 362]],
  [[925, 350], [945, 362], [968, 362], [968, 312], [990, 312], [990, 360]],
  [[1088, 515], [1088, 445], [1110, 445], [1110, 515], [1130, 515], [1130, 180], [1150, 180], [1150, 212], [1170, 212], [1170, 157], [1190, 157], [1190, 175]],
];
const kagiDown: Pt[][] = [
  [[10, 780], [10, 805], [33, 805], [33, 780]],
  [[136, 718], [136, 790], [155, 790], [155, 692], [177, 692], [177, 962], [197, 962], [197, 895], [216, 895], [216, 966], [275, 970]],
  [[460, 610], [460, 683], [482, 683], [482, 605]],
  [[663, 292], [704, 292], [704, 498], [725, 498], [725, 472], [745, 472], [745, 595], [765, 595], [765, 470]],
  [[865, 362], [905, 358], [905, 378], [925, 378], [925, 350]],
  [[988, 360], [988, 487], [1010, 487], [1010, 462], [1028, 462], [1028, 552], [1048, 552], [1048, 520], [1068, 525], [1068, 575], [1090, 575], [1090, 520]],
];
const aoBars: [number, number, number][] = [
  [10, -75, 1], [30, -72, 1], [50, -70, 1], [71, -52, 1], [91, -42, 1], [112, -28, 1], [132, -25, 1], [152, -25, 1], [172, -25, 0], [192, -38, 0],
  [213, -55, 0], [233, -72, 0], [254, -82, 0], [274, -85, 0], [295, -78, 1], [315, -55, 1], [336, -30, 1], [356, -5, 1], [376, 15, 1], [396, 35, 1],
  [417, 45, 1], [437, 48, 1], [457, 48, 1], [478, 48, 1], [498, 50, 1], [519, 65, 1], [539, 80, 1], [559, 95, 1], [580, 110, 1], [600, 125, 1],
  [620, 135, 1], [640, 138, 1], [661, 140, 1], [681, 140, 0], [701, 130, 0], [722, 110, 0], [743, 85, 0], [763, 62, 0], [783, 48, 0], [804, 42, 0],
  [824, 48, 1], [845, 60, 1], [865, 68, 1], [885, 70, 1], [905, 65, 0], [925, 58, 0], [945, 52, 0], [966, 45, 0], [987, 35, 0], [1007, 22, 0],
  [1027, 10, 0], [1048, -4, 0], [1067, -22, 0], [1088, -30, 0], [1108, -35, 0], [1128, -25, 1], [1148, -5, 1], [1169, 18, 1], [1190, 42, 1],
];

const KagiChart = () => (
  <Plot viewBox="1122 634 463 457">
    <rect x={1520} y={634} width={65} height={457} fill="#101a23" />
    <GridLines xs={[1192, 1334, 1417]} ys={[701, 726, 751, 776, 801, 826, 851, 877, 902, 927]} x0={1122} x1={1520} y0={634} y1={945} />
    <path d={`M${px(Z6, 642)} 640V1085`} stroke="#1a2730" strokeDasharray="2 2" />
    {kagiDown.map((pts, i) => <Poly key={i} z={Z6} pts={pts} c="#b05a44" w={1.4} />)}
    {kagiUp.map((pts, i) => <Poly key={i} z={Z6} pts={pts} c="#5ca5de" w={2.6} />)}
    <Poly z={Z6} c="#b4bf49" w={2.4} pts={[[10, 778], [60, 772], [120, 763], [160, 765], [210, 785], [250, 797], [295, 802], [350, 785], [400, 768], [460, 755], [510, 735], [570, 695], [630, 650], [680, 615], [720, 602], [780, 595], [850, 560], [960, 520], [1040, 518], [1070, 522], [1130, 512], [1190, 470]]} />
    <JumpButton x={px(Z6, 1147)} y={py(Z6, 990)} />
    <AxisText x={1536} y={649}>AUTO</AxisText>
    <Axis z={Z6} x={1225} ticks={[['1.31200', 223], ['1.31000', 301], ['1.30800', 376], ['1.30600', 453], ['1.30400', 528], ['1.30200', 603], ['1.30000', 681], ['1.29800', 756], ['1.29600', 833], ['1.29400', 908], ['1.29200', 983]]} />
    <rect x={1122} y={py(Z6, 1035)} width={398} height={2} fill="#24303a" />
    <path d={`M${px(Z6, 590)} ${py(Z6, 1038)}h12`} stroke="#3c4851" strokeWidth={2} strokeDasharray="2 2" />
    {aoBars.map(([x, h, up]) => (
      <rect key={x} x={px(Z6, x) - 1} y={py(Z6, h > 0 ? 1218 - h : 1218)} width={2.2} height={Math.abs(h) / 3} fill={up ? '#2f7d4a' : '#c73c3c'} />
    ))}
    <AxisText x={1536} y={960}>AUTO</AxisText>
    <Axis z={Z6} x={1220} ticks={[['0.00500', 1118], ['0.00000', 1193], ['-0.00500', 1265]]} />
    <Tag z={Z6} x0={1207} x1={1385} y={1328} text="-0.00753" bg="#0c141b" stripe="#9aa3a8" />
    <rect x={px(Z6, 615)} y={py(Z6, 1365)} width={18} height={18} fill="#17232c" />
    <SmallLabel x={px(Z6, 642)} y={py(Z6, 1392) + 4}>W</SmallLabel>
    <TimeAxis z={Z6} y={1395} ticks={[['00', 35], ['04.10.2018', 328], ['08.10.2018', 775], ['11:00', 1008], ['22:', 1165]]} />
    <rect x={px(Z6, 250)} y={py(Z6, 1444)} width={92} height={2} fill="#1f2a33" />
    <Zoomers x1={px(Z6, 1265)} x2={px(Z6, 1345)} y={py(Z6, 1405)} />
  </Plot>
);

const LegendClose = () => <X size={10} color="#26323a" />;
const MiniBars = () => (
  <svg width="11" height="11" viewBox="0 0 12 12"><path d="M1 11V7h2v4zM5 11V4h2v7zM9 11V1h2v10z" fill="#27323a" /></svg>
);

const App = () => (
  <>
    <GlobalStyle />
    <Sheet>
      <TopBand />
      <Heading>
        <HeadingCode>G3 </HeadingCode>Varios tipos de gráficos
      </Heading>
      <AppWindow>
        <WindowBar>
          <Grip />
          Bind
          <WindowActions>
            <Square size={12} />
            <X size={13} />
          </WindowActions>
        </WindowBar>
        <Columns>
          <Column $gap={0}>
            <Panel $h={485}>
              <TitleBar><Grip />Chart BTC/USDT Time - 1H</TitleBar>
              <ChartToolbar h={35} symbol="BTC/USDT" hint="Binance" time="Time - 1H" active />
              <Body>
                <SideRail top={1} foot={5} />
                <ChartArea>
                  <ClusterChart />
                  <InfoStrip $left={0} $top={1} $w={540} $fs={12}>
                    <span>Bar <LegendValue>0</LegendValue></span>
                    <span>Date <LegendValue>26.10.2018</LegendValue></span>
                    <span>Time <LegendValue>11:00:00</LegendValue></span>
                    <span>Open <LegendValue>6 533.60</LegendValue></span>
                    <span>High <LegendValue>6 538.05</LegendValue></span>
                    <span>Low <LegendValue>6 5...</LegendValue></span>
                  </InfoStrip>
                </ChartArea>
              </Body>
            </Panel>
            <Tabs>
              <Tab $on $w={76}>CLUSTER</Tab>
              <Tab $w={106}>STEP PROFILE</Tab>
              <Tab $w={109}>LEFT PROFILE</Tab>
              <Tab $w={113}>RIGHT PROFILE</Tab>
              <Tab $w={124}>TIME STATISTICS</Tab>
              <Tab $w={40}>TI!</Tab>
              <GearIcon w={15} />
            </Tabs>
            <PanelGap />
            <Panel $h={448}>
              <TitleBar><Grip />Chart US SPX 500 Time - 4H</TitleBar>
              <ChartToolbar h={29} symbol="US SPX 500" hint="OANDA v2.0 Demo" time="Time - 4H" />
              <Body>
                <SideRail top={9} foot={9} />
                <ChartArea>
                  <SpxChart />
                  <Legend $left={7} $top={10}>
                    <MiniBars />Keltner (5: 2: Close: SMA)<LegendDot $c="#d97a3a" />
                    <LegendValue>2 664.44000</LegendValue><LegendDot $c="#c7433d" />
                    <LegendValue>2 710.16000</LegendValue><LegendDot $c="#7a8186" /><LegendClose />
                  </Legend>
                </ChartArea>
              </Body>
            </Panel>
          </Column>
          <Column>
            <Panel $h={485}>
              <TitleBar><Grip />Chart EUR/USD Renko - 10C, 5m</TitleBar>
              <Body>
                <ChartArea>
                  <RenkoChart />
                  <Legend $left={7} $top={6}>
                    <MiniBars />EMA (22: Close)<LegendDot $c="#46a35c" />
                    <LegendValue>1.13734</LegendValue><LegendClose />
                  </Legend>
                  <Legend $left={7} $top={322}>
                    <MiniBars />Momentum 9 Close<LegendDot $c="#d08f38" />
                    <LegendValue>0.00056</LegendValue>
                  </Legend>
                </ChartArea>
              </Body>
            </Panel>
            <Panel $h={481}>
              <TitleBar><Grip />Chart US SPX 500 Heikin Ashi - 1H</TitleBar>
              <Body>
                <ChartArea>
                  <HeikinChart />
                  <Legend $left={7} $top={6}>
                    <MiniBars />MMA (20: Close)<LegendDot $c="#3d86c6" />
                    <LegendValue>2 670.93351</LegendValue><LegendClose />
                  </Legend>
                  <Legend $left={62} $top={31}>
                    EMA (50: Close)<LegendDot $c="#cf9640" />
                    <LegendValue>2 687.04115</LegendValue><LegendClose />
                  </Legend>
                  <Legend $left={7} $top={278}>
                    <MiniBars />ATR (1:SMA)<LegendDot $c="#a7d4cc" />
                    <LegendValue>15.03616</LegendValue><LegendClose />
                  </Legend>
                </ChartArea>
              </Body>
            </Panel>
          </Column>
          <Column>
            <Panel $h={485}>
              <TitleBar><Grip />Chart WEST TEXAS OIL P&amp;F - 3*5C, 1m</TitleBar>
              <Body>
                <SideRail top={4} foot={5} />
                <ChartArea>
                  <PfChart />
                  <PfCard>
                    <PfHead>
                      <span>Bar</span><span>26.10.2018</span>
                      <PfBright>0</PfBright><span>12:14:00</span>
                    </PfHead>
                    <PfRows>
                      <PfName>Open</PfName><PfValue>66.803</PfValue>
                      <PfName>High</PfName><PfValue>66.803</PfValue>
                      <PfName>Low</PfName><PfValue>66.793</PfValue>
                      <PfName>Close</PfName><PfValue>66.793</PfValue>
                      <PfName $sep>Change, %</PfName><PfValue $sep>-0.02</PfValue>
                      <PfName>Ticks</PfName><PfValue>68</PfValue>
                      <PfName>Volume</PfName><PfValue>0</PfValue>
                    </PfRows>
                  </PfCard>
                </ChartArea>
              </Body>
            </Panel>
            <Panel $h={481}>
              <TitleBar><Grip />Chart GBP/USD Kagi - 5Kg, 1H</TitleBar>
              <Body>
                <ChartArea>
                  <KagiChart />
                  <InfoStrip $left={3} $top={6} $w={392} $fs={13.5}>
                    <span>B: <LegendValue>0</LegendValue></span>
                    <span>D: <LegendValue>26.10.2018</LegendValue></span>
                    <span>T: <LegendValue>10:00:00</LegendValue></span>
                    <span>O: <LegendValue>1.28054</LegendValue></span>
                    <span>H: <LegendValue>1.28224</LegendValue></span>
                  </InfoStrip>
                  <Legend $left={8} $top={31}>
                    <MiniBars />EMA (50: Close)<LegendDot $c="#c7cc3f" />
                    <LegendValue>1.29113</LegendValue><LegendClose />
                  </Legend>
                  <Legend $left={8} $top={320}>
                    <MiniBars />AO<LegendDot $c="#9aa3a8" />
                    <LegendValue>-0.00753</LegendValue><LegendClose />
                  </Legend>
                </ChartArea>
              </Body>
            </Panel>
          </Column>
        </Columns>
      </AppWindow>
      <Caption>
        Use los tipos de gráficos que mejor se adapten a su estrategia: Punto y figura, Heikin Ashi, Renko, de tics, Kagi, de barras, de rotura de línea, etc.
      </Caption>
      <Source>Fuente: https://docs.google.com/document/d/1foZ9oi1ac_AbV30h2qApyvwbEceihCUdXtIr1uajdfU/edit#</Source>
    </Sheet>
  </>
);

export default App;
